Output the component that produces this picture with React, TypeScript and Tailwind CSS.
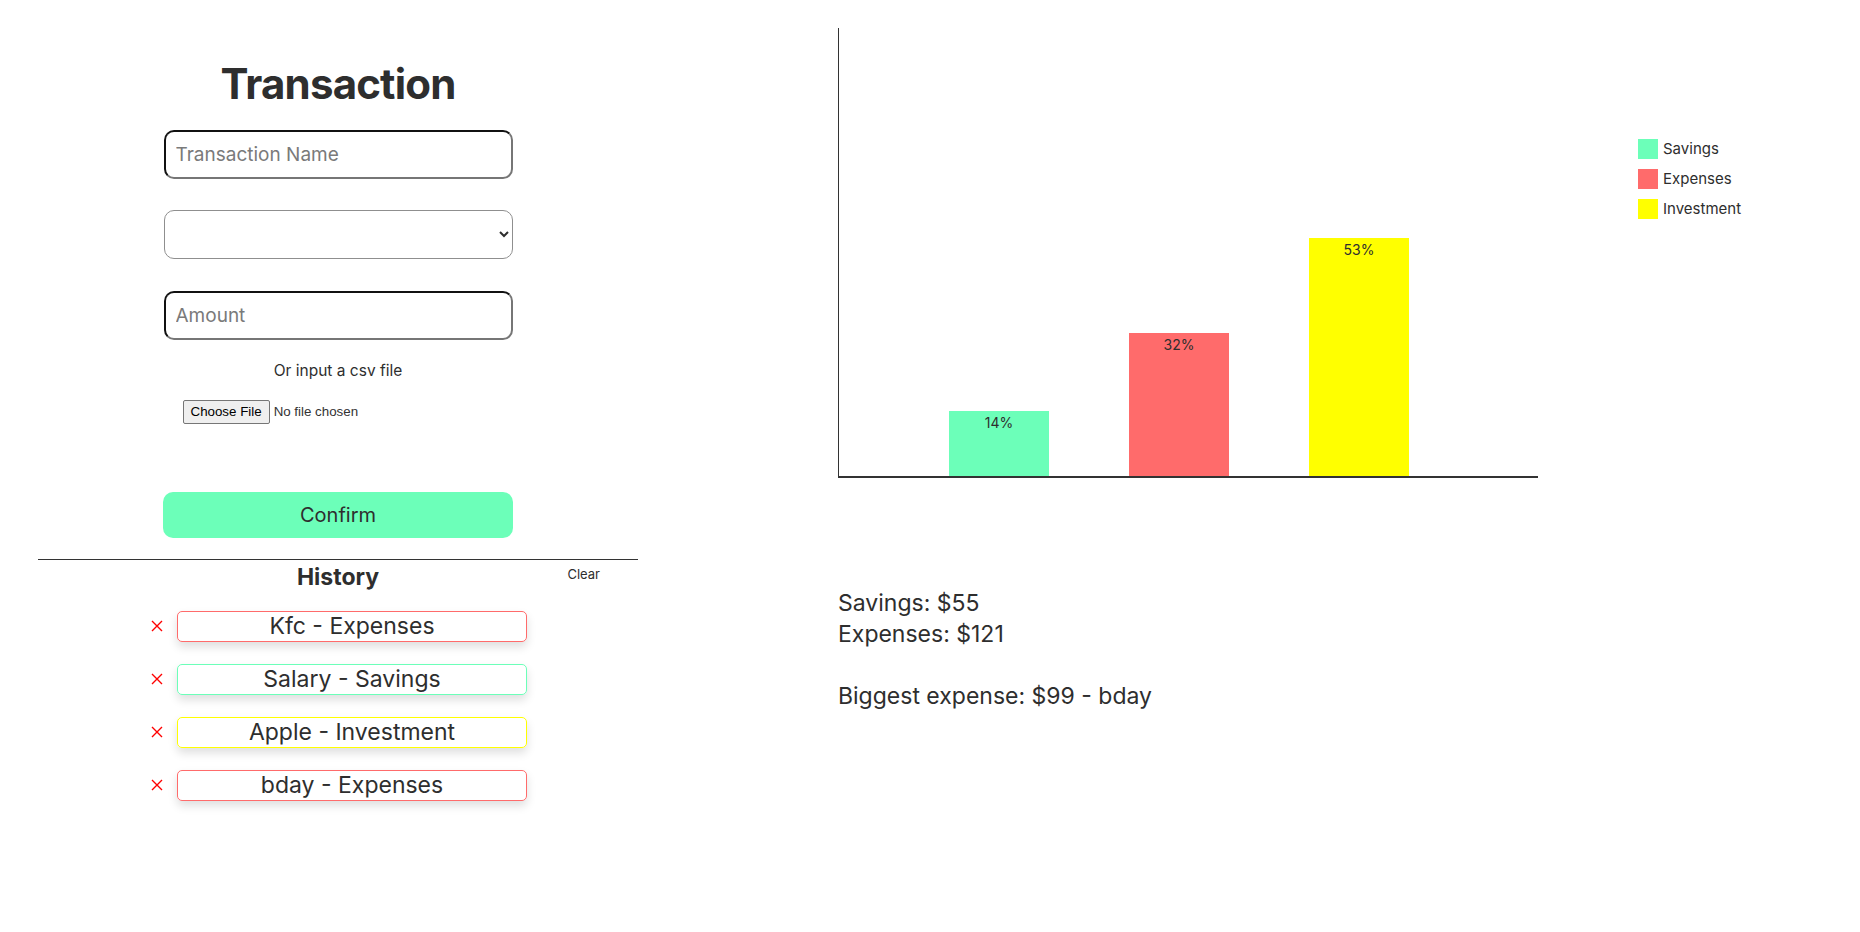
import React from 'react';

const history = [
  { name: 'Kfc', type: 'Expenses', border: 'border-[#ff6b6b]' },
  { name: 'Salary', type: 'Savings', border: 'border-[#6cffb9]' },
  { name: 'Apple', type: 'Investment', border: 'border-[#ffff00]' },
  { name: 'bday', type: 'Expenses', border: 'border-[#ff6b6b]' },
];

const bars = [
  { pct: '14%', height: 65, bg: 'bg-[#6cffb9]' },
  { pct: '32%', height: 143, bg: 'bg-[#ff6b6b]' },
  { pct: '53%', height: 238, bg: 'bg-[#ffff00]' },
];

const legend = [
  { label: 'Savings', bg: 'bg-[#6cffb9]' },
  { label: 'Expenses', bg: 'bg-[#ff6b6b]' },
  { label: 'Investment', bg: 'bg-[#ffff00]' },
];

function RemoveIcon() {
  return (
    <svg width="12" height="12" viewBox="0 0 12 12" className="shrink-0">
      <path d="M1 1L11 11M11 1L1 11" stroke="#ff0000" strokeWidth="1.4" />
    </svg>
  );
}

export default function App() {
  return (
    <div className="min-h-screen bg-white flex font-['Inter',sans-serif] text-[#2e2e2e]">
      {/* form + history */}
      <div className="w-[676px] flex flex-col items-center pt-[57px]">
        <h1 className="text-[42px] leading-[53px] font-bold tracking-[-0.8px]">Transaction</h1>

        <input
          type="text"
          placeholder="Transaction Name"
          className="mt-[20px] w-[349px] h-[49px] rounded-[10px] border-2 border-[#767676] border-t-[#111] border-l-[#111] px-[10px] text-[19px] placeholder:text-[#7a7a7a] outline-none"
        />

        <select className="mt-[31px] w-[349px] h-[49px] rounded-[10px] border border-[#8f8f8f] px-[8px] text-[19px] bg-white outline-none">
          <option value=""></option>
          <option>Savings</option>
          <option>Expenses</option>
          <option>Investment</option>
        </select>

        <input
          type="text"
          placeholder="Amount"
          className="mt-[32px] w-[349px] h-[49px] rounded-[10px] border-2 border-[#767676] border-t-[#111] border-l-[#111] px-[10px] text-[19px] placeholder:text-[#7a7a7a] outline-none"
        />

        <p className="mt-[19px] text-[15.5px] leading-[24px]">Or input a csv file</p>

        <div className="mt-[17px] w-[349px] pl-[19px] flex">
          <input
            type="file"
            className="font-['Liberation_Sans',sans-serif] text-[13.333px] text-[#333] file:mr-[4px] file:border file:border-[#767676] file:bg-[#efefef] file:rounded-[2px] file:px-[7px] file:py-[1px] file:text-black"
          />
        </div>

        <button className="mt-[68px] w-[350px] h-[46px] rounded-[10px] bg-[#6cffb9] text-[20px]">Confirm</button>

        <div className="mt-[21px] w-[600px] border-t border-[#333]" />

        <div className="w-[600px] relative flex justify-center pt-[2px]">
          <h2 className="text-[23px] leading-[30px] font-bold">History</h2>
          <button className="absolute right-[38px] top-[5px] text-[13px]">Clear</button>
        </div>

        <div className="mt-[19px] flex flex-col gap-[22px] pl-[2px]">
          {history.map((item) => (
            <div key={item.name} className="flex items-center gap-[14px]">
              <RemoveIcon />
              <div
                className={`w-[350px] h-[31px] rounded-[5px] border ${item.border} flex items-center justify-center text-[23px] shadow-[0_5px_10px_rgba(0,0,0,0.13)]`}
              >
                {item.name} - {item.type}
              </div>
            </div>
          ))}
        </div>
      </div>

      {/* chart + summary */}
      <div className="ml-[162px] pt-[28px] flex flex-col">
        <div className="flex">
          <div className="w-[700px] h-[450px] border-l border-b-2 border-[#333] flex items-end pl-[110px] gap-[80px]">
            {bars.map((b) => (
              <div
                key={b.pct}
                className={`w-[100px] ${b.bg} flex justify-center pt-[2px] text-[14px] leading-[20px]`}
                style={{ height: b.height }}
              >
                {b.pct}
              </div>
            ))}
          </div>

          <div className="ml-[100px] mt-[111px] flex flex-col gap-[10px]">
            {legend.map((l) => (
              <div key={l.label} className="flex items-center gap-[5px] h-[20px]">
                <span className={`w-[20px] h-[20px] ${l.bg}`} />
                <span className="text-[15px]">{l.label}</span>
              </div>
            ))}
          </div>
        </div>

        <div className="mt-[110px] text-[23px] leading-[31px]">
          <p>Savings: $55</p>
          <p>Expenses: $121</p>
          <br />
          <p>Biggest expense: $99 - bday</p>
        </div>
      </div>
    </div>
  );
}
